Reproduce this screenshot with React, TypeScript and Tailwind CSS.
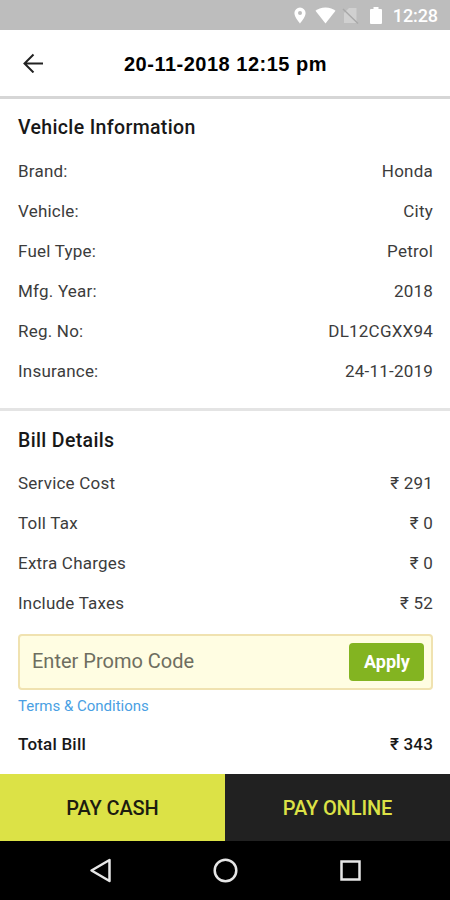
interface LineItem {
  label: string;
  value: string;
}

const vehicleInfo: LineItem[] = [
  { label: 'Brand:', value: 'Honda' },
  { label: 'Vehicle:', value: 'City' },
  { label: 'Fuel Type:', value: 'Petrol' },
  { label: 'Mfg. Year:', value: '2018' },
  { label: 'Reg. No:', value: 'DL12CGXX94' },
  { label: 'Insurance:', value: '24-11-2019' },
];

const billDetails: LineItem[] = [
  { label: 'Service Cost', value: '₹ 291' },
  { label: 'Toll Tax', value: '₹ 0' },
  { label: 'Extra Charges', value: '₹ 0' },
  { label: 'Include Taxes', value: '₹ 52' },
];

function StatusBar() {
  return (
    <div className="flex h-[30px] items-center justify-end bg-[#bdbdbd] pt-px pr-[12px] text-white">
      <svg width="12" height="17" viewBox="0 0 12 17" className="mr-[9px]">
        <path
          fill="currentColor"
          fillRule="evenodd"
          d="M6 .5A5.600 5.600 0 0 0 .4 6.100C.4 10.300 6 16.500 6 16.500s5.600-6.200 5.600-10.400A5.600 5.600 0 0 0 6 .5zm0 7.600a2 2 0 1 1 0-4 2 2 0 0 1 0 4z"
        />
      </svg>
      <svg width="21" height="17" viewBox="0 0 22 17" preserveAspectRatio="none" className="mr-[6px]">
        <path fill="currentColor" d="M11 16.500.5 3.800C3 1.800 6.500.5 11 .5s8 1.300 10.500 3.300z" />
      </svg>
      <svg width="17" height="18" viewBox="0 0 17 18" className="mr-[11px]">
        <path fill="#d0d0d0" d="M7 1h7.500v15H2V6z" />
        <path stroke="#a8a8a8" strokeWidth="1.400" d="M1 2l15 14.500" />
      </svg>
      <svg width="12" height="17" viewBox="0 0 12 17" className="mr-[11px]">
        <path fill="currentColor" d="M3.500 0h5v2H11a1 1 0 0 1 1 1v13a1 1 0 0 1-1 1H1a1 1 0 0 1-1-1V3a1 1 0 0 1 1-1h2.500z" />
      </svg>
      <span className="pt-px text-[18px] leading-none font-medium tracking-[-0.1px]">12:28</span>
    </div>
  );
}

function Row({ label, value }: LineItem) {
  return (
    <div className="flex h-[40px] items-center justify-between text-[17px] tracking-[0.22px] text-[#3c3c3c]">
      <span>{label}</span>
      <span>{value}</span>
    </div>
  );
}

export default function App() {
  return (
    <main className="flex h-[900px] w-[450px] flex-col overflow-hidden bg-white font-['Roboto',sans-serif]">
      <StatusBar />

      <header className="flex h-[69px] items-center border-b-[3px] border-[#d6d6d6] pl-[23px]">
        <svg width="20" height="20" viewBox="0 0 20 20" fill="none" stroke="#222" strokeWidth="2">
          <path d="M20 10.500H1.500M10.500 1.500l-9 9 9 9" />
        </svg>
        <h1 className="ml-[81px] pt-[2px] font-['Liberation_Sans',sans-serif] text-[20px] font-bold tracking-[0.5px] text-black">
          20-11-2018 12:15 pm
        </h1>
      </header>

      <section className="h-[312px] border-b-[3px] border-[#e4e4e4] pt-[12px] pr-[17px] pl-[18px]">
        <h2 className="flex h-[41px] items-start text-[19.500px] leading-[34px] font-medium tracking-[0.35px] text-[#181818]">
          Vehicle Information
        </h2>
        {vehicleInfo.map((item) => (
          <Row key={item.label} {...item} />
        ))}
      </section>

      <section className="flex-1 pt-[13px] pr-[17px] pl-[18px]">
        <h2 className="flex h-[40px] items-start text-[19.500px] leading-[34px] font-medium tracking-[0.35px] text-[#181818]">
          Bill Details
        </h2>
        {billDetails.map((item) => (
          <Row key={item.label} {...item} />
        ))}

        <div className="mt-[10px] flex h-[56px] items-center justify-between rounded-[4px] border-2 border-[#f0e2b0] bg-[#fffde2] pr-[7px] pl-[12px]">
          <span className="pb-[2px] text-[20px] text-[#6e6e60]">Enter Promo Code</span>
          <button className="h-[38px] w-[75px] rounded-[4px] bg-[#83b421] pb-[2px] pl-px text-[18px] font-bold text-white">
            Apply
          </button>
        </div>
        <a className="mt-[5px] block text-[15px] leading-[22px] text-[#4a9fe3]">Terms &amp; Conditions</a>
        <div className="mt-[12px] flex h-[32px] items-center justify-between text-[17px] font-medium tracking-[0.2px] text-[#181818]">
          <span>Total Bill</span>
          <span>₹ 343</span>
        </div>
      </section>

      <div className="grid h-[67px] grid-cols-2 text-[20px] font-medium tracking-[-0.1px]">
        <button className="bg-[#dce246] text-[#1c1c10]">PAY CASH</button>
        <button className="bg-[#212121] text-[#dce246]">PAY ONLINE</button>
      </div>

      <nav className="flex h-[59px] items-center bg-black text-[#e6e6e6]">
        <svg width="450" height="59" viewBox="0 0 450 59" fill="none" stroke="currentColor" strokeWidth="2.500">
          <path strokeLinejoin="round" d="M91.500 29.500l18-10.500v21z" />
          <circle cx="225.500" cy="29.500" r="10.800" />
          <path d="M341.500 20.500h18v18h-18z" />
        </svg>
      </nav>
    </main>
  );
}
